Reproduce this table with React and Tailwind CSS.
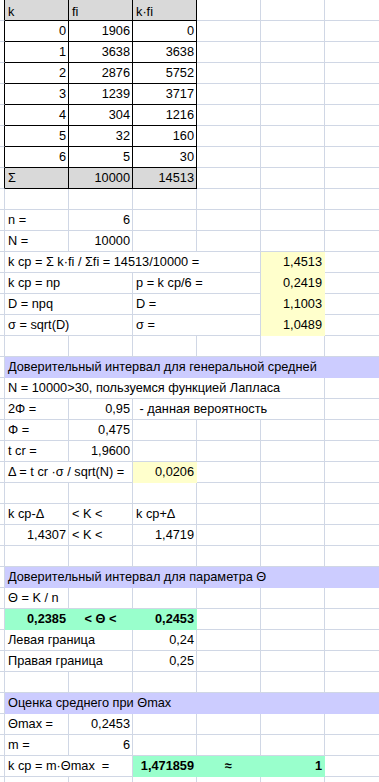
import React from "react";

const GRID = "border-[#d0d7e5]";

// w = columns spanned, a = align, bg = fill, b = bold, tb = black table border
const rows = [
  { tb: true, head: true, cells: [{ t: "k", bg: "g", tb: true }, { t: "fi", bg: "g", tb: true }, { t: "k·fi", bg: "g", tb: true }, {}, {}, {}] },
  ...[
    ["0", "1906", "0"],
    ["1", "3638", "3638"],
    ["2", "2876", "5752"],
    ["3", "1239", "3717"],
    ["4", "304", "1216"],
    ["5", "32", "160"],
    ["6", "5", "30"],
  ].map((r) => ({
    tb: true,
    cells: [...r.map((t) => ({ t, a: "r", tb: true })), {}, {}, {}],
  })),
  { tb: true, cells: [{ t: "Σ", bg: "g", tb: true }, { t: "10000", a: "r", bg: "g", tb: true }, { t: "14513", a: "r", bg: "g", tb: true }, {}, {}, {}] },
  { cells: [{}, {}, {}, {}, {}, {}] },
  { cells: [{ t: "n =" }, { t: "6", a: "r" }, {}, {}, {}, {}] },
  { cells: [{ t: "N =" }, { t: "10000", a: "r" }, {}, {}, {}, {}] },
  { cells: [{ t: "k cp = Σ k·fi / Σfi = 14513/10000 =", w: 4 }, { t: "1,4513", a: "r", bg: "y" }, {}] },
  { cells: [{ t: "k cp = np", w: 2 }, { t: "p = k cp/6 =", w: 2 }, { t: "0,2419", a: "r", bg: "y" }, {}] },
  { cells: [{ t: "D = npq", w: 2 }, { t: "D =", w: 2 }, { t: "1,1003", a: "r", bg: "y" }, {}] },
  { cells: [{ t: "σ = sqrt(D)", w: 2 }, { t: "σ =", w: 2 }, { t: "1,0489", a: "r", bg: "y" }, {}] },
  { cells: [{}, {}, {}, {}, {}, {}] },
  { cells: [{ t: "Доверительный интервал для генеральной средней", w: 6, bg: "l" }] },
  { cells: [{ t: "N = 10000>30, пользуемся функцией Лапласа", w: 5 }, {}] },
  { cells: [{ t: "2Φ =" }, { t: "0,95", a: "r" }, { t: " - данная вероятность", w: 3 }, {}] },
  { cells: [{ t: "Φ =" }, { t: "0,475", a: "r" }, {}, {}, {}, {}] },
  { cells: [{ t: "t cr =" }, { t: "1,9600", a: "r" }, {}, {}, {}, {}] },
  { cells: [{ t: "Δ = t cr ·σ / sqrt(N) =", w: 2 }, { t: "0,0206", a: "r", bg: "y" }, {}, {}, {}] },
  { cells: [{}, {}, {}, {}, {}, {}] },
  { cells: [{ t: "k cp-Δ" }, { t: "< K <" }, { t: "k cp+Δ" }, {}, {}, {}] },
  { cells: [{ t: "1,4307", a: "r" }, { t: "< K <" }, { t: "1,4719", a: "r" }, {}, {}, {}] },
  { cells: [{}, {}, {}, {}, {}, {}] },
  { cells: [{ t: "Доверительный интервал для параметра Θ", w: 6, bg: "l" }] },
  { cells: [{ t: "Θ = K / n" }, {}, {}, {}, {}, {}] },
  { cells: [{ t: "0,2385", a: "r", bg: "m", b: true }, { t: "< Θ <", a: "c", bg: "m", b: true }, { t: "0,2453", a: "r", bg: "m", b: true }, {}, {}, {}] },
  { cells: [{ t: "Левая граница", w: 2 }, { t: "0,24", a: "r" }, {}, {}, {}] },
  { cells: [{ t: "Правая граница", w: 2 }, { t: "0,25", a: "r" }, {}, {}, {}] },
  { cells: [{}, {}, {}, {}, {}, {}] },
  { cells: [{ t: "Оценка среднего при Θmax", w: 6, bg: "l" }] },
  { cells: [{ t: "Θmax =" }, { t: "0,2453", a: "r" }, {}, {}, {}, {}] },
  { cells: [{ t: "m =" }, { t: "6", a: "r" }, {}, {}, {}, {}] },
  { cells: [{ t: "k cp = m·Θmax  =", w: 2 }, { t: "1,471859", a: "r", bg: "m", b: true }, { t: "≈", a: "c", bg: "m", b: true }, { t: "1", a: "r", bg: "m", b: true }, {}] },
  { cells: [{}, {}, {}, {}, {}, {}] },
];

const widths = {
  1: "w-[64px]",
  2: "w-[128px]",
  3: "w-[192px]",
  4: "w-[256px]",
  5: "w-[320px]",
  6: "w-[384px]",
};

const fills = {
  g: "bg-[#d9d9d9]",
  y: "bg-[#ffffcc] border-[#ffffcc]",
  l: "bg-[#ccccff] border-[#ccccff]",
  m: "bg-[#99ffcc] border-[#99ffcc]",
};

const Cell = ({ c, head }) => {
  const w = widths[c.w || 1];
  let border = GRID;
  if (c.bg && c.bg !== "g") border = "";
  if (c.tb) border = "border-black";
  const align =
    c.a === "r" ? "text-right pr-[2px]" : c.a === "c" ? "text-center" : "text-left pl-[3px]";
  return (
    <div
      className={`${w} shrink-0 h-[21px] border-r border-b ${border} ${c.bg ? fills[c.bg] : ""} ${align} ${c.b ? "font-bold" : ""} ${head && c.t ? "pt-[2px]" : ""} whitespace-pre overflow-hidden leading-[20px]`}
    >
      {c.t}
    </div>
  );
};

export default function App() {
  return (
    <div
      className="w-[379px] h-[782px] overflow-hidden bg-white text-black text-[12.75px]"
      style={{ fontFamily: '"Liberation Sans", Arial, sans-serif' }}
    >
      {rows.map((r, i) => (
        <div key={i} className="flex">
          <div
            className={`w-[5px] shrink-0 h-[21px] border-r border-b ${GRID} ${r.tb ? "border-r-black" : ""}`}
          />
          {r.cells.map((c, j) => (
            <Cell key={j} c={c} head={r.head} />
          ))}
        </div>
      ))}
    </div>
  );
}
